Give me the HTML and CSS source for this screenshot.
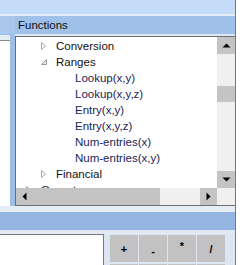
FILE: index.html
```html
<!DOCTYPE html>
<html>
<head>
<meta charset="utf-8">
<link rel="stylesheet" href="styles.css">
</head>
<body>
<div class="app">
  <div class="topbar"></div>
  <div class="band"></div>
  <div class="main">
    <div class="side">
      <div class="side-head"></div>
      <div class="side-box"></div>
    </div>
    <div class="panel">
      <div class="panel-head">Functions</div>
      <div class="panel-gap"></div>
      <div class="box">
        <div class="list">
          <div class="row l1"><svg class="tri" width="8" height="10" viewBox="0 0 8 10"><path d="M1.5 1.5 L5.5 5 L1.5 8.5 Z" fill="none" stroke="#a6a6a6" stroke-width="1"/></svg><span class="cat">Conversion</span></div>
          <div class="row l1"><svg class="tri" width="8" height="10" viewBox="0 0 8 10"><path d="M6.5 2.5 L6.5 7.5 L1.5 7.5 Z" fill="#e8e8e8" stroke="#9a9a9a" stroke-width="1"/></svg><span class="cat">Ranges</span></div>
          <div class="row l2"><span class="fn">Lookup(x,y)</span></div>
          <div class="row l2"><span class="fn">Lookup(x,y,z)</span></div>
          <div class="row l2"><span class="fn">Entry(x,y)</span></div>
          <div class="row l2"><span class="fn">Entry(x,y,z)</span></div>
          <div class="row l2"><span class="fn">Num-entries(x)</span></div>
          <div class="row l2"><span class="fn">Num-entries(x,y)</span></div>
          <div class="row l1"><svg class="tri" width="8" height="10" viewBox="0 0 8 10"><path d="M1.5 1.5 L5.5 5 L1.5 8.5 Z" fill="none" stroke="#a6a6a6" stroke-width="1"/></svg><span class="cat">Financial</span></div>
          <div class="row l0"><svg class="tri" width="8" height="10" viewBox="0 0 8 10"><path d="M1.5 1.5 L5.5 5 L1.5 8.5 Z" fill="none" stroke="#a6a6a6" stroke-width="1"/></svg><span class="cat">Operators</span></div>
        </div>
        <div class="vscroll">
          <div class="sbtn"><svg width="9" height="5" viewBox="0 0 9 5"><path d="M0.5 4.5 L4.5 0.5 L8.5 4.5 Z" fill="#000"/></svg></div>
          <div class="track t1"></div>
          <div class="thumb vthumb"></div>
          <div class="track grow"></div>
          <div class="sbtn"><svg width="9" height="5" viewBox="0 0 9 5"><path d="M0.5 0.5 L4.5 4.5 L8.5 0.5 Z" fill="#000"/></svg></div>
        </div>
        <div class="hscroll">
          <div class="sbtn"><svg width="5" height="9" viewBox="0 0 5 9"><path d="M4.5 0.5 L0.5 4.5 L4.5 8.5 Z" fill="#000"/></svg></div>
          <div class="thumb hthumb"></div>
          <div class="track grow"></div>
          <div class="sbtn"><svg width="5" height="9" viewBox="0 0 5 9"><path d="M0.5 0.5 L4.5 4.5 L0.5 8.5 Z" fill="#000"/></svg></div>
        </div>
        <div class="corner"></div>
      </div>
    </div>
  </div>
  <div class="band2"></div>
  <div class="bluebar"></div>
  <div class="band3"></div>
  <div class="bottom">
    <div class="input"></div>
    <div class="keys">
      <div class="key">+</div>
      <div class="key minus">-</div>
      <div class="key star">*</div>
      <div class="key">/</div>
      <div class="key"></div>
      <div class="key"></div>
      <div class="key"></div>
      <div class="key"></div>
    </div>
  </div>
</div>
</body>
</html>
```

FILE: styles.css
```css
* { box-sizing: border-box; }
html, body { margin: 0; padding: 0; }
body {
  width: 249px;
  height: 265px;
  overflow: hidden;
  background: #ffffff;
  font-family: "Liberation Sans", Arial, sans-serif;
}
.app {
  width: 236px;
  height: 265px;
  border-right: 1px solid #3f84cf;
  display: flex;
  flex-direction: column;
  overflow: hidden;
}
.topbar { height: 14px; background: #c5dcf9; flex: none; }
.band { height: 2px; background: #e4ecf5; flex: none; }
.main { height: 190px; display: flex; flex: none; }
.side {
  width: 15px;
  background: #a0bfe7;
  display: flex;
  flex-direction: column;
}
.side-head { height: 18px; background: #a9c7eb; }
.side-box {
  width: 10px;
  margin-top: 1px;
  flex: 1;
  background: #ffffff;
  border-top: 5px solid #e4ecf4;
  box-shadow: inset 0 1px 0 #8a8a8a;
}
.panel { width: 220px; display: flex; flex-direction: column; }
.panel-head {
  height: 18px;
  background: #9fc0e9;
  color: #111;
  font-size: 11.5px;
  line-height: 18px;
  padding-left: 3px;
}
.panel-gap { height: 2px; background: #dfe8f2; }
.box {
  height: 170px;
  border: 1px solid #6e6e6e;
  border-right: none;
  display: grid;
  grid-template-columns: 201px 18px;
  grid-template-rows: 151px 17px;
  background: #fff;
}
.list {
  overflow: hidden;
  padding-top: 1px;
}
.row {
  height: 16px;
  display: flex;
  align-items: center;
  font-size: 11.5px;
  white-space: nowrap;
}
.tri { flex: none; margin-right: 8px; }
.l0 { padding-left: 9px; }
.l1 { padding-left: 24px; }
.l2 { padding-left: 59px; }
.cat { color: #111; }
.fn { color: #1a2458; }
.vscroll {
  display: flex;
  flex-direction: column;
  background: #f0f0f0;
}
.sbtn {
  flex: none;
  width: 17px;
  height: 17px;
  background: #c4c4c4;
  display: flex;
  align-items: center;
  justify-content: center;
}
.vscroll .sbtn { width: 18px; }
.track { background: #f0f0f0; }
.t1 { height: 32px; }
.grow { flex: 1; }
.thumb { background: #c4c4c4; }
.vthumb { height: 16px; }
.hscroll { display: flex; background: #f0f0f0; }
.hthumb { width: 127px; }
.corner { background: #f0f0f0; }
.band2 { height: 6px; background: #e6edf5; flex: none; }
.bluebar { height: 18px; background: #94b5e1; flex: none; }
.band3 { height: 4px; background: #e2e9f3; flex: none; }
.bottom {
  flex: 1;
  background: #dce6f2;
  display: flex;
  align-items: flex-start;
  gap: 6px;
}
.input {
  width: 104px;
  height: 40px;
  background: #fff;
  border-top: 1px solid #7a7a7a;
  border-right: 1px solid #7a7a7a;
}
.keys {
  margin-top: 1px;
  display: grid;
  grid-template-columns: repeat(4, 28px);
  grid-auto-rows: 27px;
  gap: 2px 1px;
}
.key {
  background: #c2c2c2;
  color: #000;
  font-weight: bold;
  font-size: 11px;
  display: flex;
  align-items: center;
  justify-content: center;
  padding-top: 1px;
}
.minus { padding-top: 4px; }
.star { padding-bottom: 5px; padding-top: 0; }
```
